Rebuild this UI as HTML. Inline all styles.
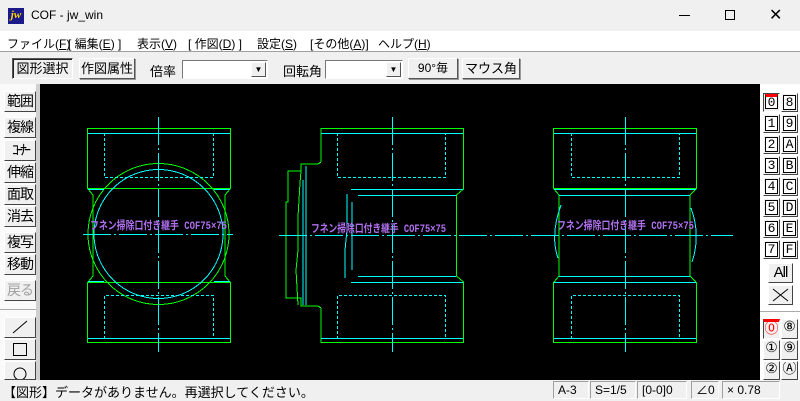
<!DOCTYPE html>
<html><head><meta charset="utf-8">
<style>
*{margin:0;padding:0;box-sizing:border-box}
body{width:800px;height:400px;overflow:hidden;background:#f0f0f0;font-family:"Liberation Sans","Noto Sans CJK JP",sans-serif;position:relative}
.a{position:absolute}
.t{font-size:12px;color:#000;white-space:nowrap}
.btn{position:absolute;background:#f0f0f0;border:1px solid;border-color:#fff #555 #555 #fff;box-shadow:1px 1px 0 #999;font-size:13px;text-align:center;white-space:nowrap;color:#000}
.lb{position:absolute;left:4px;width:32px;height:21px;background:#f0f0f0;border:1px solid;border-color:#fff #444 #444 #fff;font-size:14px;line-height:19px;text-align:center;letter-spacing:-1px;white-space:nowrap;overflow:hidden}
.rb{position:absolute;width:17px;height:19px;background:#f0f0f0;border:1px solid;border-color:#fff #444 #444 #fff;font-family:"Liberation Mono",monospace;font-size:13px;line-height:17px;text-align:center}
.rb span{display:inline-block;border:1px solid #000;width:13px;height:15px;line-height:14px;background:#fff}
.st{position:absolute;top:381px;height:18px;border:1px solid;border-color:#a0a0a0 #fff #fff #a0a0a0;font-size:12px;line-height:16px;padding-left:4px}
</style></head><body>
<div class="a" style="left:0;top:0;width:800px;height:31px;background:#f0f0f0"></div>
<div class="a" style="left:8px;top:8px;width:16px;height:16px;background:#1a1a8a;color:#ffd700;font:bold italic 11px 'Liberation Serif',serif;line-height:15px;text-align:center">jw</div>
<div class="a t" style="left:31px;top:8px;font-size:12px">COF - jw_win</div>
<div class="a" style="left:679px;top:15px;width:11px;height:1px;background:#000"></div>
<div class="a" style="left:725px;top:10px;width:10px;height:10px;border:1px solid #000"></div>
<div class="a t" style="left:769px;top:5px;font-size:16px;font-weight:300">✕</div>
<div class="a" style="left:0;top:31px;width:800px;height:21px;background:#fff;border-bottom:1px solid #a0a0a0"></div>
<div class="a t" style="left:7px;top:35px">ファイル(<u>F</u>)</div>
<div class="a t" style="left:68px;top:35px">[ 編集(<u>E</u>) ]</div>
<div class="a t" style="left:137px;top:35px">表示(<u>V</u>)</div>
<div class="a t" style="left:188px;top:35px">[ 作図(<u>D</u>) ]</div>
<div class="a t" style="left:257px;top:35px">設定(<u>S</u>)</div>
<div class="a t" style="left:310px;top:35px">[その他(<u>A</u>)]</div>
<div class="a t" style="left:378px;top:35px">ヘルプ(<u>H</u>)</div>
<div class="btn" style="left:12px;top:58px;width:61px;height:21px;border-color:#555 #fff #fff #555;box-shadow:inset 1px 1px 0 #222;line-height:19px">図形選択</div>
<div class="btn" style="left:79px;top:58px;width:56px;height:21px;line-height:19px">作図属性</div>
<div class="a t" style="left:150px;top:61px;font-size:13px">倍率</div>
<div class="a" style="left:182px;top:60px;width:86px;height:19px;background:#fff;border:1px solid;border-color:#777 #fff #fff #777"></div>
<div class="a" style="left:251px;top:62px;width:15px;height:15px;background:#f0f0f0;border:1px solid;border-color:#fff #555 #555 #fff;font-size:8px;text-align:center;line-height:14px">▼</div>
<div class="a t" style="left:283px;top:61px;font-size:13px">回転角</div>
<div class="a" style="left:325px;top:60px;width:78px;height:19px;background:#fff;border:1px solid;border-color:#777 #fff #fff #777"></div>
<div class="a" style="left:386px;top:62px;width:15px;height:15px;background:#f0f0f0;border:1px solid;border-color:#fff #555 #555 #fff;font-size:8px;text-align:center;line-height:14px">▼</div>
<div class="btn" style="left:408px;top:58px;width:50px;height:21px;line-height:19px;font-size:12px">90°毎</div>
<div class="btn" style="left:462px;top:58px;width:58px;height:21px;line-height:19px">マウス角</div>
<div class="a" style="left:0;top:84px;width:36px;height:296px;background:#fafafa"></div>
<div class="a" style="left:36px;top:84px;width:4px;height:296px;background:#d0d0d0"></div>
<div class="lb" style="top:91px">範囲</div>
<div class="lb" style="top:117px">複線</div>
<div class="lb" style="top:140px;letter-spacing:-3px">ｺｰﾅｰ</div>
<div class="lb" style="top:162px">伸縮</div>
<div class="lb" style="top:184px">面取</div>
<div class="lb" style="top:206px">消去</div>
<div class="lb" style="top:232px">複写</div>
<div class="lb" style="top:254px">移動</div>
<div class="lb" style="top:280px;color:#a0a0a0">戻る</div>
<div class="a" style="left:0;top:309px;width:36px;height:1px;background:#aaa"></div>
<div class="lb" style="top:317px"><svg width="20" height="16" style="margin-top:1px"><line x1="3" y1="14" x2="17" y2="2" stroke="#000"/></svg></div>
<div class="lb" style="top:339px"><svg width="20" height="16" style="margin-top:1px"><rect x="3.5" y="2.5" width="13" height="12" fill="none" stroke="#000"/></svg></div>
<div class="lb" style="top:361px;height:19px"><svg width="20" height="16" style="margin-top:1px"><circle cx="10" cy="11" r="6" fill="none" stroke="#000"/></svg></div>
<div class="a" style="left:760px;top:84px;width:40px;height:296px;background:#fff"></div>
<svg class="a" style="left:0;top:0" width="800" height="400">
<rect x="40" y="84" width="720" height="296" fill="#000"/>
<g fill="none" stroke-width="1" shape-rendering="crispEdges">
<g stroke="#00ff00">
<rect x="87.5" y="128.5" width="143" height="60"/>
<rect x="87.5" y="282.5" width="143" height="60"/>
<polyline points="88,189 93,195 93,276 88,282"/>
<polyline points="230,189 225,195 225,276 230,282"/>
<circle cx="158.5" cy="234" r="70.5"/>
</g>
<g stroke="#00ffff">
<line x1="88" y1="133.5" x2="230" y2="133.5"/><line x1="88" y1="338.5" x2="230" y2="338.5"/>
<line x1="88" y1="189.5" x2="104" y2="189.5"/><line x1="214" y1="189.5" x2="230" y2="189.5"/>
<line x1="88" y1="281.5" x2="104" y2="281.5"/><line x1="214" y1="281.5" x2="230" y2="281.5"/>
<circle cx="158.5" cy="234" r="64.5"/>
<polyline stroke-dasharray="3,2" points="104.5,133 104.5,177.5 213.5,177.5 213.5,133"/>
<polyline stroke-dasharray="3,2" points="104.5,339 104.5,295.5 213.5,295.5 213.5,339"/>
<line x1="158.5" y1="117" x2="158.5" y2="352" stroke-dasharray="28,3,2,3"/>
<line x1="83" y1="234.5" x2="233" y2="234.5" stroke-dasharray="28,3,2,3"/>
</g>
<g stroke="#00ff00">
<polyline points="321,162 321,128.5 463.5,128.5 463.5,189 456.5,195 456.5,276 463.5,282 463.5,342.5 321,342.5 321,308"/>
<polyline points="321,162 318,164 301,164 301,171 288,171 288,202 286,202 286,298 301,298 301,306 318,306 321,308"/>
<polyline points="301,171 300,183 298,217 298,250 296,270 298,305"/>
</g>
<g stroke="#00ffff">
<line x1="321" y1="133.5" x2="463" y2="133.5"/><line x1="321" y1="338.5" x2="463" y2="338.5"/>
<line x1="351" y1="189.5" x2="463" y2="189.5"/><line x1="358" y1="195.5" x2="456" y2="195.5"/>
<line x1="358" y1="276.5" x2="456" y2="276.5"/><line x1="351" y1="282.5" x2="463" y2="282.5"/>
<polyline points="306,166 306,305"/><polyline points="303,180 303,305"/>
<polyline points="347,194 347,230 345,250 345,278"/><polyline points="352,202 352,270"/>
<polyline stroke-dasharray="3,2" points="337.5,133 337.5,177.5 445.5,177.5 445.5,133"/>
<polyline stroke-dasharray="3,2" points="337.5,339 337.5,295.5 445.5,295.5 445.5,339"/>
<line x1="392.5" y1="117" x2="392.5" y2="352" stroke-dasharray="28,3,2,3"/>
</g>
<g stroke="#00ff00">
<rect x="553.5" y="128.5" width="143" height="60"/>
<rect x="553.5" y="282.5" width="143" height="60"/>
<polyline points="554,189 559,195 559,276 554,282"/>
<polyline points="696,189 690,195 690,276 696,282"/>
</g>
<g stroke="#00ffff">
<line x1="554" y1="133.5" x2="696" y2="133.5"/><line x1="554" y1="338.5" x2="696" y2="338.5"/>
<line x1="554" y1="189.5" x2="696" y2="189.5"/><line x1="559" y1="195.5" x2="690" y2="195.5"/>
<line x1="559" y1="276.5" x2="690" y2="276.5"/><line x1="554" y1="282.5" x2="696" y2="282.5"/>
<path d="M561,205 Q550,235 558,258"/><path d="M691,208 Q701,235 692,262"/>
<polyline stroke-dasharray="3,2" points="571.5,133 571.5,177.5 679.5,177.5 679.5,133"/>
<polyline stroke-dasharray="3,2" points="571.5,339 571.5,295.5 679.5,295.5 679.5,339"/>
<line x1="625.5" y1="117" x2="625.5" y2="352" stroke-dasharray="28,3,2,3"/>
<line x1="279" y1="235.5" x2="733" y2="235.5" stroke-dasharray="28,3,2,3"/>
</g>
</g>
<g font-family="'Liberation Mono','Noto Sans CJK JP',monospace" font-size="11" font-weight="bold" fill="#b070f0">
<text x="90" y="229" textLength="137" lengthAdjust="spacingAndGlyphs">フネン掃除口付き継手 COF75×75</text>
<text x="311" y="232" textLength="135" lengthAdjust="spacingAndGlyphs">フネン掃除口付き継手 COF75×75</text>
<text x="557" y="229" textLength="137" lengthAdjust="spacingAndGlyphs">フネン掃除口付き継手 COF75×75</text>
</g>
</svg>
<div class="rb" style="left:763px;top:93px;border-color:#444 #fff #fff #444"><span style="border-top:3px solid red;line-height:12px">0</span></div>
<div class="rb" style="left:781px;top:93px"><span>8</span></div>
<div class="rb" style="left:763px;top:114px"><span>1</span></div><div class="rb" style="left:781px;top:114px"><span>9</span></div>
<div class="rb" style="left:763px;top:135px"><span>2</span></div><div class="rb" style="left:781px;top:135px"><span>A</span></div>
<div class="rb" style="left:763px;top:156px"><span>3</span></div><div class="rb" style="left:781px;top:156px"><span>B</span></div>
<div class="rb" style="left:763px;top:177px"><span>4</span></div><div class="rb" style="left:781px;top:177px"><span>C</span></div>
<div class="rb" style="left:763px;top:198px"><span>5</span></div><div class="rb" style="left:781px;top:198px"><span>D</span></div>
<div class="rb" style="left:763px;top:219px"><span>6</span></div><div class="rb" style="left:781px;top:219px"><span>E</span></div>
<div class="rb" style="left:763px;top:240px"><span>7</span></div><div class="rb" style="left:781px;top:240px"><span>F</span></div>
<div class="rb" style="left:768px;top:263px;width:25px;height:20px;font-family:'Liberation Sans',sans-serif;font-size:15px;letter-spacing:-1px">All</div>
<div class="rb" style="left:768px;top:285px;width:25px;height:20px"><svg width="23" height="18"><path d="M4,3L19,15M19,3L4,15" stroke="#000" fill="none"/></svg></div>
<div class="a" style="left:760px;top:311px;width:40px;height:1px;background:#aaa"></div>
<div class="rb" style="left:763px;top:319px;height:20px;border-color:#444 #fff #fff #444;border-top:3px solid red;color:red;font-size:14px">⓪</div>
<div class="rb" style="left:781px;top:319px;height:20px;font-size:14px">⑧</div>
<div class="rb" style="left:763px;top:340px;height:20px;font-size:14px">①</div><div class="rb" style="left:781px;top:340px;height:20px;font-size:14px">⑨</div>
<div class="rb" style="left:763px;top:361px;height:19px;font-size:14px;overflow:hidden">②</div><div class="rb" style="left:781px;top:361px;height:19px;font-size:14px;overflow:hidden">Ⓐ</div>
<div class="a" style="left:0;top:380px;width:800px;height:20px;background:#f0f0f0"></div>
<div class="a t" style="left:3px;top:382px;font-size:13px">【図形】データがありません。再選択してください。</div>
<div class="st" style="left:553px;width:36px">A-3</div>
<div class="st" style="left:590px;width:46px">S=1/5</div>
<div class="st" style="left:637px;width:50px">[0-0]0</div>
<div class="st" style="left:691px;width:28px">∠0</div>
<div class="st" style="left:722px;width:58px">× 0.78</div>
</body></html>
